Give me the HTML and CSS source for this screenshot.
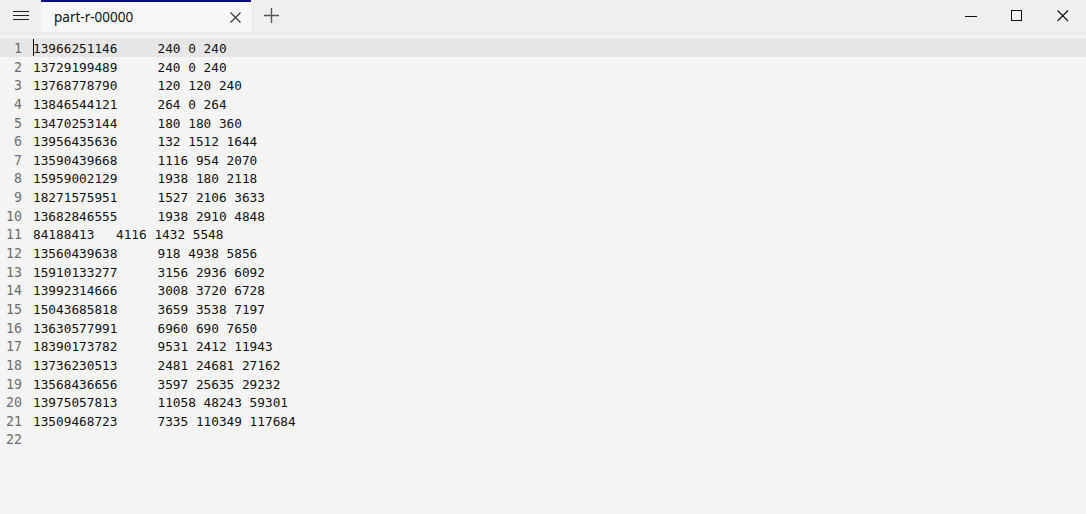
FILE: index.html
```html
<!DOCTYPE html>
<html>
<head>
<meta charset="utf-8">
<link rel="stylesheet" href="styles.css">
</head>
<body>
<div class="app">
  <div class="titlebar">
    <div class="menu-btn">
      <svg width="16" height="10" viewBox="0 0 16 10"><path d="M0 0.5H16M0 4.5H16M0 8.5H16" stroke="#222" stroke-width="1"/></svg>
    </div>
    <div class="tab">
      <span class="tab-title">part-r-00000</span>
      <svg class="tab-close" width="11" height="11" viewBox="0 0 11 11"><path d="M0.5 0.5L10.5 10.5M10.5 0.5L0.5 10.5" stroke="#333" stroke-width="1.1"/></svg>
    </div>
    <div class="add-btn">
      <svg width="15" height="15" viewBox="0 0 15 15"><path d="M7.5 0V15M0 7.5H15" stroke="#555" stroke-width="1.4"/></svg>
    </div>
    <div class="spacer"></div>
    <div class="winbtn"><svg width="12" height="12" viewBox="0 0 12 12"><path d="M0 6.5H12" stroke="#111" stroke-width="1"/></svg></div>
    <div class="winbtn"><svg width="12" height="12" viewBox="0 0 12 12"><rect x="0.5" y="0.5" width="10" height="10" fill="none" stroke="#111" stroke-width="1"/></svg></div>
    <div class="winbtn"><svg width="12" height="12" viewBox="0 0 12 12"><path d="M0.5 0.5L11 11M11 0.5L0.5 11" stroke="#111" stroke-width="1.1"/></svg></div>
  </div>
  <div class="editor">
    <div class="line current"><span class="ln">1</span><span class="txt"><span class="caret"></span>13966251146	240 0 240</span></div>
    <div class="line"><span class="ln">2</span><span class="txt">13729199489	240 0 240</span></div>
    <div class="line"><span class="ln">3</span><span class="txt">13768778790	120 120 240</span></div>
    <div class="line"><span class="ln">4</span><span class="txt">13846544121	264 0 264</span></div>
    <div class="line"><span class="ln">5</span><span class="txt">13470253144	180 180 360</span></div>
    <div class="line"><span class="ln">6</span><span class="txt">13956435636	132 1512 1644</span></div>
    <div class="line"><span class="ln">7</span><span class="txt">13590439668	1116 954 2070</span></div>
    <div class="line"><span class="ln">8</span><span class="txt">15959002129	1938 180 2118</span></div>
    <div class="line"><span class="ln">9</span><span class="txt">18271575951	1527 2106 3633</span></div>
    <div class="line"><span class="ln">10</span><span class="txt">13682846555	1938 2910 4848</span></div>
    <div class="line"><span class="ln">11</span><span class="txt">84188413	4116 1432 5548</span></div>
    <div class="line"><span class="ln">12</span><span class="txt">13560439638	918 4938 5856</span></div>
    <div class="line"><span class="ln">13</span><span class="txt">15910133277	3156 2936 6092</span></div>
    <div class="line"><span class="ln">14</span><span class="txt">13992314666	3008 3720 6728</span></div>
    <div class="line"><span class="ln">15</span><span class="txt">15043685818	3659 3538 7197</span></div>
    <div class="line"><span class="ln">16</span><span class="txt">13630577991	6960 690 7650</span></div>
    <div class="line"><span class="ln">17</span><span class="txt">18390173782	9531 2412 11943</span></div>
    <div class="line"><span class="ln">18</span><span class="txt">13736230513	2481 24681 27162</span></div>
    <div class="line"><span class="ln">19</span><span class="txt">13568436656	3597 25635 29232</span></div>
    <div class="line"><span class="ln">20</span><span class="txt">13975057813	11058 48243 59301</span></div>
    <div class="line"><span class="ln">21</span><span class="txt">13509468723	7335 110349 117684</span></div>
    <div class="line"><span class="ln">22</span><span class="txt"></span></div>
  </div>
</div>
</body>
</html>
```
FILE: styles.css
```css
html, body {
  margin: 0;
  padding: 0;
  width: 1086px;
  height: 514px;
  overflow: hidden;
  background: #f3f3f3;
}
.app {
  display: flex;
  flex-direction: column;
  height: 514px;
}
.titlebar {
  display: flex;
  align-items: stretch;
  height: 32px;
  background: #efefef;
  font-family: "Noto Sans", "Liberation Sans", sans-serif;
}
.menu-btn {
  width: 41px;
  display: flex;
  align-items: center;
  justify-content: center;
  padding-bottom: 1px;
}
.tab {
  width: 210px;
  box-sizing: border-box;
  background: #f7f7f7;
  border-top: 2px solid #0a0a8c;
  display: flex;
  align-items: center;
  padding: 0 10px 0 13px;
}
.tab-title {
  font-size: 13.5px;
  color: #111;
  flex: 1;
  padding-bottom: 1px;
}
.add-btn {
  width: 40px;
  display: flex;
  align-items: center;
  justify-content: center;
  padding-bottom: 2px;
}
.spacer { flex: 1; }
.winbtn {
  width: 46px;
  display: flex;
  align-items: center;
  justify-content: center;
}
.editor {
  flex: 1;
  background: #f4f4f4;
  border-top: 1px solid #e9e9e9;
  box-shadow: inset 0 4px 3px -2px #e8e8e8;
  padding-top: 5px;
  font-family: "DejaVu Sans Mono", "Liberation Mono", monospace;
  font-size: 12.75px;
}
.line {
  display: flex;
  height: 18.65px;
  box-sizing: border-box;
  padding-top: 4px;
  line-height: 14.65px;
  white-space: pre;
}
.line.current {
  background: #e6e6e6;
}
.ln {
  width: 22px;
  text-align: right;
  color: #6e6e6e;
  flex: none;
  font-size: 13.25px;
}
.txt {
  padding-left: 11px;
  color: #111;
  tab-size: 41.5px;
  -moz-tab-size: 41.5px;
  position: relative;
}
.caret {
  position: absolute;
  left: 11px;
  top: -3px;
  width: 1px;
  height: 17px;
  background: #000;
}
```
